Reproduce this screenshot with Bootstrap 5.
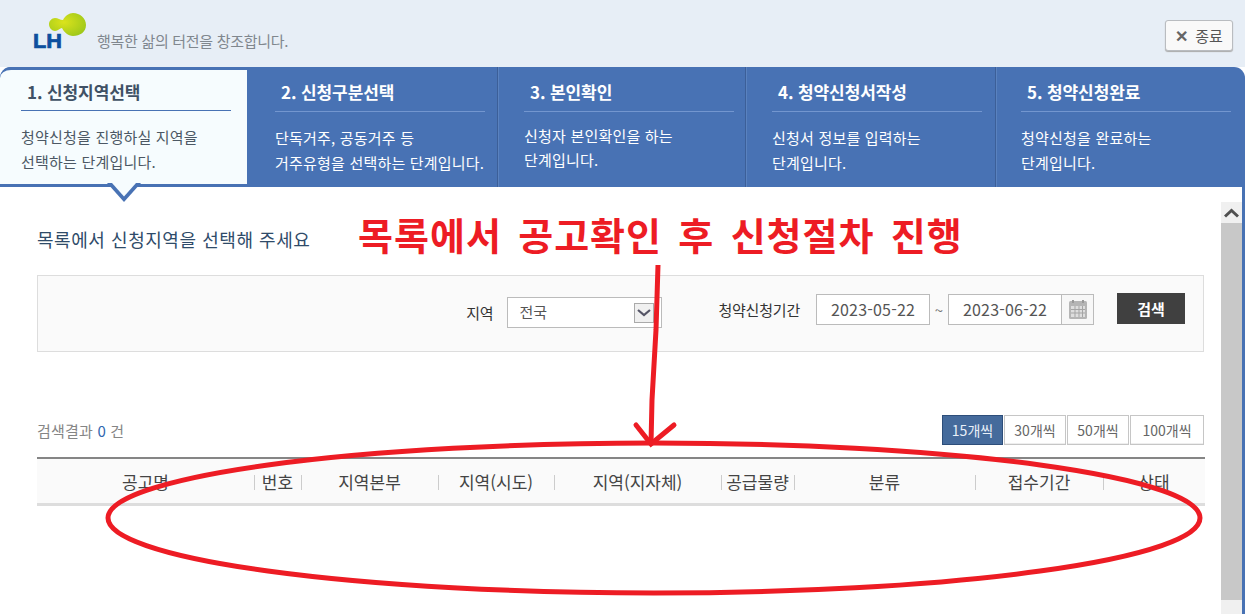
<!DOCTYPE html>
<html lang="ko">
<head>
    <meta charset="UTF-8">
    <meta content="width=device-width, initial-scale=1.0" name="viewport">
    <title>청약신청 - 신청지역선택</title>
    <link href="https://cdn.jsdelivr.net/npm/bootstrap@5.3.0/dist/css/bootstrap.min.css" rel="stylesheet">
    <style>
        html, body { height: 614px; overflow: hidden; }
        body { font-family: "Noto Sans CJK KR", "Liberation Sans", sans-serif; background: #fff; color: #444; position: relative; }

        .top-head { height: 67px; background: #e7eef6; }
        .logo-svg { margin: 12px 0 0 32px; }
        .logo-svg text { font-family: "Liberation Sans", sans-serif; font-weight: 700; font-size: 21px; fill: #0d4f9e; stroke: #0d4f9e; stroke-width: .7px; }
        .tagline { margin: 30px 0 0 5px; font-size: 15px; line-height: 22px; color: #80878e; letter-spacing: -.3px; }
        .close-btn { width: 68px; height: 31px; margin: 20px 12px 0 0; padding: 0; font-size: 15px; line-height: 28px; color: #555; background: #f9f9f9; border: 1px solid #b9bcc0; border-radius: 3px; box-shadow: 0 1px 1px #aaa; }
        .close-btn b { color: #666; font-size: 16px; margin-right: 7px; }

        .step-bar { height: 120px; background: #4872b4; border-radius: 11px 11px 0 0; color: #fff; }
        .step-item { width: 250px; padding-left: 27px; box-shadow: inset 1px 0 0 #3c5f98, inset 2px 0 0 #5a82bf; }
        .step-item:nth-child(2) { padding-left: 28px; box-shadow: none; }
        .step-item:nth-child(3) { width: 248px; }
        .step-item:nth-child(5) { padding-left: 26px; }
        .step-title { width: 210px; height: 45px; padding: 12px 0 0 6px; font-size: 17px; line-height: 26px; font-weight: 700; border-bottom: 1px solid #7396cf; white-space: nowrap; letter-spacing: -.1px; }
        .step-text { margin-top: 13px; font-size: 15px; line-height: 25px; white-space: nowrap; letter-spacing: .2px; }
        .step-item:nth-child(3) .step-text { margin-top: 12px; line-height: 24px; }
        .step-active { width: 247px; padding-left: 21px; background: #f6fcfe; color: #3f5165; border: solid #4872b4; border-width: 3px 0; border-radius: 11px 0 0 0; box-shadow: none; position: relative; }
        .step-active .step-title { height: 41px; padding-top: 9px; border-bottom-color: #4872b4; }
        .step-active .step-text { color: #4c5864; }
        .step-notch { position: absolute; left: 107px; top: 113px; }

        .main-area { height: 427px; }
        .page-body { width: 1221px; padding: 0 17px 0 37px; }
        .guide-title { height: 88px; padding-top: 39px; font-size: 18px; line-height: 26px; color: #2f4b69; letter-spacing: .55px; }

        .filter-box { height: 77px; padding: 18px 18px 0 0; background: #fafafa; border: 1px solid #ddd; font-size: 15px; }
        .filter-label { line-height: 31px; color: #333; letter-spacing: -.2px; }
        .region-label { margin: 3px 14px 0 0; }
        .region-select { width: 155px; height: 31px; margin: 3px 56px 0 0; padding: 0 0 0 11px; font-size: 15px; color: #555; border: 1px solid #bbb; border-radius: 0; appearance: none; background: #fff url("data:image/svg+xml,%3Csvg xmlns='http://www.w3.org/2000/svg' viewBox='0 0 20 20'%3E%3Crect x='.5' y='.5' width='19' height='19' fill='%23f0f0f0' stroke='%23aaa'/%3E%3Cpath d='M4 7l6 5 6-5' fill='none' stroke='%23556' stroke-width='2.2'/%3E%3C/svg%3E") no-repeat 126px 5px / 20px 20px; }
        .date-input { width: 114px; height: 31px; font-size: 16px; color: #555; background: #fff; border: 1px solid #bbb; letter-spacing: .2px; line-height: 29px; text-align: center; }
        .date-sep { width: 18px; text-align: center; line-height: 31px; color: #777; }
        .cal-btn { width: 32px; height: 31px; border: 1px solid #bbb; border-left: 0; background: #f7f7f7; }
        .search-btn { width: 68px; height: 31px; margin: -1px 0 0 23px; padding: 0; border: 0; border-radius: 0; background: #404040; color: #fff; font-size: 15px; font-weight: 700; line-height: 31px; }

        .result-row { margin-top: 63px; height: 30px; margin-bottom: 12px; }
        .result-count { font-size: 15px; line-height: 32px; color: #858585; letter-spacing: .2px; }
        .result-count span { color: #2f66b0; }
        .size-btn { height: 30px; margin-left: 1px; padding: 0; border: 1px solid #c6c6c6; border-radius: 0; background: #fff; box-shadow: inset 0 -1px 0 #eee; font-size: 14px; line-height: 28px; color: #666; letter-spacing: 0; }
        .size-btn.on { width: 61px; background: #456b9c; color: #e9f0f8; border-color: #2d4e7a; box-shadow: none; }
        .size-mid { width: 62px; }
        .size-wide { width: 74px; }

        .list-table { width: 1168px; margin: 0; table-layout: fixed; border-top: 2px solid #858585; border-bottom: 3px solid #ddd; }
        .list-table th { height: 46px; padding: 2px 0 0; background: #fafafa; border: 0; text-align: center; vertical-align: middle; font-size: 17px; font-weight: 400; color: #444; white-space: nowrap; box-shadow: none; }
        .list-table th + th { background: #fafafa linear-gradient(#ccc, #ccc) no-repeat left 16px / 1px 15px; }

        .scroll-col { width: 21px; padding-top: 15px; }
        .scroll-up { height: 21px; background: #f0f0f0; }
        .scroll-thumb { height: 377px; background: #c8c8c8; }
        .scroll-rest { flex-grow: 1; background: #f0f0f0; }
        .edge-line { width: 3px; background: #4872b4; }

        .note-layer { position: absolute; left: 0; top: 0; pointer-events: none; }
        .note-layer text { font-family: "Noto Sans CJK KR", sans-serif; font-weight: 700; font-size: 38px; letter-spacing: 1px; word-spacing: 4.7px; fill: #ed1c24; }
    </style>
</head>
<body>
<header class="top-head d-flex">
    <svg class="logo-svg" width="60" height="40" viewBox="0 0 60 40">
        <defs>
            <radialGradient id="leafGreen" cx="0.4" cy="0.4" r="0.7">
                <stop offset="0" stop-color="#dbe31c"/>
                <stop offset="1" stop-color="#9cc71a"/>
            </radialGradient>
        </defs>
        <path fill="url(#leafGreen)" d="M17 12c0-3 3-6 6-6 3 0 5 2 8 2 2-4 6-7 10-7 7 0 13 5 13 12S48 24 41 24c-5 0-9-4-11-8-2 0-4 3-7 3-3 0-6-3-6-7z"/>
        <text x="1" y="36" textLength="29" lengthAdjust="spacingAndGlyphs">LH</text>
    </svg>
    <div class="tagline">행복한 삶의 터전을 창조합니다.</div>
    <button class="close-btn ms-auto" type="button"><b>✕</b>종료</button>
</header>

<nav class="step-bar d-flex">
    <div class="step-item step-active">
        <div class="step-title">1. 신청지역선택</div>
        <div class="step-text">청약신청을 진행하실 지역을<br>선택하는 단계입니다.</div>
        <svg class="step-notch" width="34" height="20" viewBox="0 0 34 20">
            <path d="M0 0H34L17 19Z" fill="#4872b4"/>
            <path d="M5 0H29L17 13.5Z" fill="#f6fcfe"/>
        </svg>
    </div>
    <div class="step-item">
        <div class="step-title">2. 신청구분선택</div>
        <div class="step-text">단독거주, 공동거주 등<br>거주유형을 선택하는 단계입니다.</div>
    </div>
    <div class="step-item">
        <div class="step-title">3. 본인확인</div>
        <div class="step-text">신청자 본인확인을 하는<br>단계입니다.</div>
    </div>
    <div class="step-item">
        <div class="step-title">4. 청약신청서작성</div>
        <div class="step-text">신청서 정보를 입력하는<br>단계입니다.</div>
    </div>
    <div class="step-item">
        <div class="step-title">5. 청약신청완료</div>
        <div class="step-text">청약신청을 완료하는<br>단계입니다.</div>
    </div>
</nav>

<main class="main-area d-flex">
    <section class="page-body">
        <h1 class="guide-title fw-normal m-0">목록에서 신청지역을 선택해 주세요</h1>

        <div class="filter-box d-flex justify-content-end align-items-start">
            <span class="filter-label region-label">지역</span>
            <select class="region-select"><option>전국</option></select>
            <span class="filter-label me-3">청약신청기간</span>
            <div class="date-input">2023-05-22</div>
            <span class="date-sep">~</span>
            <div class="date-input">2023-06-22</div>
            <div class="cal-btn d-flex align-items-center justify-content-center">
                <svg width="18" height="19" viewBox="0 0 18 19">
                    <rect x="0" y="1" width="18" height="18" rx="1.5" fill="#b5b5b5"/>
                    <rect x="2" y="6" width="14" height="11" fill="#dedede"/>
                    <path d="M2 9.5H16M2 13H16M6 6V17M10 6V17M13.5 6V17" stroke="#a5a5a5" stroke-width="1"/>
                    <rect x="3" y="0" width="2" height="3" fill="#999"/>
                    <rect x="13" y="0" width="2" height="3" fill="#999"/>
                </svg>
            </div>
            <button class="search-btn btn" type="button">검색</button>
        </div>

        <div class="result-row d-flex justify-content-between">
            <div class="result-count">검색결과 <span>0</span> 건</div>
            <div class="d-flex">
                <button class="size-btn on btn" type="button">15개씩</button>
                <button class="size-btn size-mid btn" type="button">30개씩</button>
                <button class="size-btn size-mid btn" type="button">50개씩</button>
                <button class="size-btn size-wide btn" type="button">100개씩</button>
            </div>
        </div>

        <table class="list-table table">
            <colgroup>
                <col style="width:217px"><col style="width:47px"><col style="width:137px"><col style="width:116px"><col style="width:167px"><col style="width:73px"><col style="width:181px"><col style="width:128px"><col style="width:102px">
            </colgroup>
            <thead>
            <tr>
                <th>공고명</th>
                <th>번호</th>
                <th>지역본부</th>
                <th>지역(시도)</th>
                <th>지역(지자체)</th>
                <th>공급물량</th>
                <th>분류</th>
                <th>접수기간</th>
                <th>상태</th>
            </tr>
            </thead>
        </table>
    </section>

    <div class="scroll-col d-flex flex-column">
        <div class="scroll-up d-flex justify-content-center align-items-center">
            <svg width="15" height="10" viewBox="0 0 15 10"><path d="M1 8.5L7.5 2.5 14 8.5" fill="none" stroke="#505050" stroke-width="3"/></svg>
        </div>
        <div class="scroll-thumb"></div>
        <div class="scroll-rest"></div>
    </div>
    <div class="edge-line"></div>
</main>

<!-- 빨간 안내 표시 -->
<svg class="note-layer" width="1245" height="614" viewBox="0 0 1245 614">
    <text x="358" y="250">목록에서 공고확인 후 신청절차 진행</text>
    <path d="M658 265L656 330 652 400 651 444" fill="none" stroke="#ed1c24" stroke-width="5"/>
    <path d="M636 425L651 444 674 425" fill="none" stroke="#ed1c24" stroke-width="5" stroke-linecap="round"/>
    <ellipse cx="654" cy="518" rx="546" ry="75" fill="none" stroke="#ed1c24" stroke-width="5"/>
</svg>

<script src="https://cdn.jsdelivr.net/npm/bootstrap@5.3.0/dist/js/bootstrap.bundle.min.js"></script>
</body>
</html>
